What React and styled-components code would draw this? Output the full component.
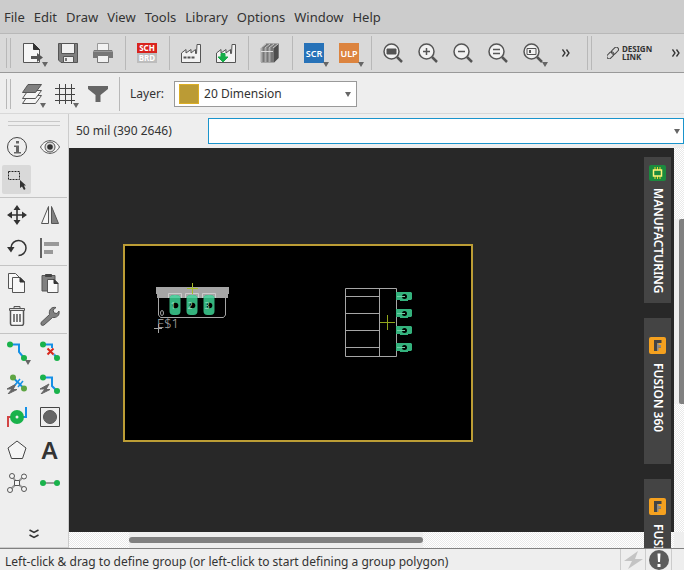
import React from "react";
import styled, { createGlobalStyle } from "styled-components";

const GlobalStyle = createGlobalStyle`
  *, *::before, *::after { box-sizing: border-box; }
  body { margin: 0; background: #eeeeee; }
  button, input, select { font: inherit; color: inherit; }
`;

const Page = styled.div`
  display: flex;
  flex-direction: column;
  height: 100vh;
  overflow: hidden;
  font-family: "Noto Sans", "Open Sans", sans-serif;
  font-size: 12px;
  line-height: 16px;
  color: #333333;
  background: #eeeeee;
`;

const MenuBar = styled.nav`
  display: flex;
  flex: none;
  gap: 9px;
  height: 33px;
  padding: 0 4px;
  align-items: center;
  font-size: 13px;
  background: #cccccc;
`;

const MenuItem = styled.button`
  padding: 0;
  border: 0;
  background: none;
  white-space: nowrap;
`;

const Toolbar = styled.div`
  display: flex;
  flex: none;
  align-items: center;
  height: ${(p) => (p.$main ? 40 : 41)}px;
  padding-top: ${(p) => (p.$main ? 0 : 2)}px;
  overflow: hidden;
  background: ${(p) => (p.$main ? "#d9d9d9" : "#eeeeee")};
  border-top: ${(p) => (p.$main ? "1px solid #b8b8b8" : "0")};
  border-bottom: 1px solid ${(p) => (p.$main ? "#999999" : "#d8d8d8")};
`;

const Grip = styled.span`
  flex: none;
  width: 5px;
  height: ${(p) => (p.$tall ? 34 : 30)}px;
  margin: 0 ${(p) => p.$after}px 0 ${(p) => p.$before}px;
  border: solid #b8b8b8;
  border-width: 0 1px;
`;

const Divider = styled.span`
  flex: none;
  width: 1px;
  height: 34px;
  margin: 0 3px 0 5px;
  background: #b8b8b8;
`;

const ToolButton = styled.button`
  display: flex;
  flex: none;
  position: relative;
  width: ${(p) => p.$width || 35}px;
  height: 32px;
  padding: 0;
  border: 0;
  background: none;
  align-items: center;
  justify-content: center;
`;

const DropMark = styled.span`
  position: absolute;
  right: 2px;
  bottom: 2px;
  border: solid transparent;
  border-width: 5px 3px 0;
  border-top-color: #666666;
`;

const DesignLink = styled.button`
  display: flex;
  flex: none;
  gap: 3px;
  align-items: center;
  padding: 0;
  border: 0;
  background: none;
  font-size: 8px;
  line-height: 8px;
  font-weight: 700;
  text-align: left;
`;

const LayerLabel = styled.label`
  margin: 0 10px 0 7px;
`;

const Combo = styled.div`
  display: flex;
  position: relative;
  align-items: center;
  flex: ${(p) => (p.$grow ? "1" : "none")};
  width: ${(p) => (p.$grow ? "auto" : "183px")};
  height: 26px;
  background: #ffffff;
  border: 1px solid ${(p) => (p.$grow ? "#1a94cc" : "#999999")};
`;

const Swatch = styled.span`
  flex: none;
  width: 20px;
  height: 20px;
  margin-left: 4px;
  background: #bb9b35;
  border: 1px solid #dcae24;
`;

const LayerSelect = styled.select`
  flex: 1;
  height: 24px;
  padding: 0 20px 0 5px;
  border: 0;
  outline: 0;
  appearance: none;
  background: transparent;
`;

const CommandInput = styled.input`
  flex: 1;
  min-width: 0;
  height: 24px;
  padding: 0 20px 0 6px;
  border: 0;
  outline: 0;
  background: transparent;
`;

const ComboArrow = styled.span`
  position: absolute;
  right: ${(p) => (p.$edge ? 3 : 5)}px;
  top: 10px;
  border: solid transparent;
  border-width: 5px 3px 0;
  border-top-color: #666666;
  pointer-events: none;
`;

const Body = styled.div`
  display: flex;
  flex: 1;
  min-height: 0;
`;

const Sidebar = styled.aside`
  display: flex;
  flex: none;
  flex-direction: column;
  width: 69px;
  border-right: 1px solid #cccccc;
  border-bottom: 1px solid #cccccc;
`;

const SideGrip = styled.div`
  height: 5px;
  flex: none;
  margin: 7px 8px 4px;
  border: solid #c8c8c8;
  border-width: 1px 0;
`;

const ToolGroup = styled.div`
  display: grid;
  flex: none;
  grid-template-columns: 33px 33px;
  grid-auto-rows: 33px;
  place-items: center;
  margin: 0 1px 0 0;
  padding-bottom: 1px;
  border-top: ${(p) => (p.$first ? "0" : "1px solid #c4c4c4")};
`;

const SideButton = styled.button`
  display: flex;
  position: relative;
  width: 29px;
  height: 29px;
  padding: 0;
  align-items: center;
  justify-content: center;
  border: 0;
  border-radius: 2px;
  background: ${(p) => (p.$active ? "#d9d9d9" : "none")};
`;

const SideMark = styled(DropMark)`
  right: 0;
  bottom: 0;
`;

const MoreButton = styled.button`
  display: flex;
  height: 16px;
  margin-top: auto;
  margin-bottom: 5px;
  padding: 0;
  border: 0;
  background: none;
  align-items: center;
  justify-content: center;
`;

const Editor = styled.main`
  display: flex;
  flex: 1;
  flex-direction: column;
  min-width: 0;
`;

const CommandRow = styled.div`
  display: flex;
  flex: none;
  height: 34px;
  align-items: center;
`;

const Coordinates = styled.span`
  flex: none;
  width: 139px;
  padding-left: 7px;
`;

const Workspace = styled.div`
  display: grid;
  flex: 1;
  position: relative;
  min-height: 0;
  grid-template: minmax(0, 1fr) 16px / minmax(0, 1fr) 10px;
  overflow: hidden;
`;

const Canvas = styled.div`
  padding: 96px 0 0 54px;
  overflow: hidden;
  background: #282828;
`;

const Track = styled.div`
  display: flex;
  flex-direction: ${(p) => (p.$vertical ? "column" : "row")};
  padding: ${(p) => (p.$vertical ? "71px 0 0" : "0 0 0 60px")};
  background: repeating-conic-gradient(#e9e9e9 0 25%, #ffffff 0 50%) 0 0 / 2px 2px;
`;

const ThumbArea = styled.div`
  display: flex;
  background: #eeeeee;
  padding: ${(p) => (p.$vertical ? "0 0 0 5px" : "5px 0")};
  ${(p) => (p.$vertical ? "height: 59%;" : "width: 54%;")}
`;

const Thumb = styled.div`
  flex: 1;
  border-radius: ${(p) => (p.$vertical ? "2px 0 0 2px" : "3px")};
  background: #808080;
`;

const TabStack = styled.div`
  display: flex;
  position: absolute;
  top: 9px;
  right: 13px;
  flex-direction: column;
  gap: 15px;
`;

const DockTab = styled.button`
  display: flex;
  flex: none;
  flex-direction: column;
  align-items: center;
  gap: ${(p) => (p.$inset ? 9 : 7)}px;
  width: 27px;
  height: 146px;
  padding: ${(p) => (p.$inset ? 19 : 8)}px 0 0;
  border: 0;
  background: #444444;
  color: #ffffff;
  font-weight: 600;
`;

const TabText = styled.span`
  writing-mode: vertical-rl;
  white-space: nowrap;
`;

const StatusBar = styled.footer`
  display: flex;
  flex: none;
  height: 22px;
  align-items: stretch;
  border-top: 1px solid #808080;
`;

const StatusText = styled.span`
  flex: 1;
  padding: 5px 0 0 5px;
  overflow: hidden;
  white-space: nowrap;
`;

const StatusCell = styled.span`
  display: flex;
  width: ${(p) => p.$width}px;
  align-items: center;
  justify-content: center;
  border-left: 1px solid #cccccc;
`;

const Svg = styled.svg`
  display: block;
  flex: none;
  font-family: "Noto Sans", sans-serif;
`;

const Icon = ({ children, w = 20, h = 20 }) => (
  <Svg width={w} height={h} viewBox={`0 0 ${w} ${h}`} fill="none" stroke="#555555" aria-hidden="true">
    {children}
  </Svg>
);

const NewIcon = () => (
  <Icon>
    <path d="M.5 .5H10.500L16.500 6.500V19.500H.5Z" fill="#f6f6f6" />
    <path d="M10.500 .5V6.500H16.500Z" fill="#333" stroke="#333" />
    <path d="M8 14.500H15" strokeWidth="3" />
    <path d="M14 10L20 14.500L14 19Z" fill="#555" stroke="none" />
  </Icon>
);

const SaveIcon = () => (
  <Icon>
    <path d="M.5 .5H19.500V19.500H3L.5 17Z" fill="#808080" />
    <path d="M3.500 .5H16.500V10.500H3.500Z" fill="#f0f0f0" />
    <path d="M5.500 13.500H15.500V19.500H5.500Z" fill="#eee" />
    <path d="M8 15V18" stroke="#777" strokeWidth="2" />
  </Icon>
);

const PrinterIcon = () => (
  <Icon>
    <path d="M4.500 .5H15.500V8H4.500Z" fill="#f2f2f2" stroke="#999" />
    <path d="M1 7H19L20 9V15H0V9Z" fill="#777" stroke="none" />
    <path d="M0 8.500H20" stroke="#999" />
    <path d="M4.500 12.500H15.500V19.500H4.500Z" fill="#f2f2f2" stroke="#777" />
  </Icon>
);

const SchBrdIcon = () => (
  <Icon>
    <path d="M0 0H20V10H0Z" fill="#d9231d" stroke="none" />
    <path d="M0 10H20V20H0Z" fill="#bdbdbd" stroke="none" />
    <g fill="#fff" stroke="none" fontSize="8" fontWeight="700" textAnchor="middle">
      <text x="10" y="8">SCH</text>
      <text x="10" y="18">BRD</text>
    </g>
  </Icon>
);

const FactoryIcon = ({ download }) => (
  <Icon>
    <path d="M.5 19.500V10L5 6.500V10L10 6.500V10L14.500 6.500V10.500H15.500L16 1.500H19.500V19.500Z" fill="#f2f2f2" />
    {download ? (
      <path d="M5 10.500H9V14H12L7 19L2 14H5Z" fill="#16ad49" stroke="#16ad49" />
    ) : (
      <path d="M2.500 14.500H14" strokeWidth="2" strokeDasharray="3 1" />
    )}
  </Icon>
);

const LibraryIcon = () => (
  <Icon>
    <path d="M1 5L6 .5H18.500V15L14 19.500H1Z" fill="#777" stroke="none" />
    <path d="M1.500 5V19M5.500 5V19M9.500 5V19" stroke="#aaa" strokeWidth="2" />
    <path d="M14 5L18.500 .5V15L14 19.500Z" fill="#4d4d4d" stroke="none" />
    <path d="M1 5L6 1M5 5L10 1M9 5L14 1M13 5L18 1" stroke="#c8c8c8" />
    <path d="M1 8.500H13" stroke="#ddd" />
  </Icon>
);

const BadgeIcon = ({ color, text }) => (
  <Icon>
    <path d="M0 0H20V20H0Z" fill={color} stroke="none" />
    <text x="10" y="14" fill="#fff" stroke="none" fontSize="9" fontWeight="600" textAnchor="middle">
      {text}
    </text>
  </Icon>
);

const ZoomIcon = ({ kind }) => (
  <Icon>
    <path d="M14 14L19 19" strokeWidth="2.500" />
    <circle cx="8.500" cy="8.500" r="7.500" fill="#f2f2f2" strokeWidth="1.500" />
    {kind === "fit" && <path d="M4 6H13V11H4Z" fill="#555" />}
    {kind === "in" && <path d="M5 8.500H12M8.500 5V12" strokeWidth="1.500" />}
    {kind === "out" && <path d="M5 8.500H12" strokeWidth="1.500" />}
    {kind === "redraw" && <path d="M5 6.500H12M5 10.500H12" strokeWidth="1.500" />}
    {kind === "select" && (
      <>
        <path d="M4 5.500H13V11.500H4Z" />
        <path d="M6 7H8V10H6Z" fill="#555" stroke="none" />
      </>
    )}
  </Icon>
);

const MoreIcon = () => (
  <Icon w={8} h={8}>
    <path d="M.5 .5L3 4L.5 7.500M4.500 .5L7 4L4.500 7.500" stroke="#333" strokeWidth="1.300" />
  </Icon>
);

const LinkIcon = () => (
  <Icon w={12} h={12}>
    <g transform="rotate(-45 6 6)" stroke="#444">
      <rect x="-1.500" y="3.500" width="8" height="4.500" rx="2.200" />
      <rect x="5" y="3.500" width="8" height="4.500" rx="2.200" />
    </g>
  </Icon>
);

const LayersIcon = () => (
  <Icon>
    <path d="M6 11.500H19.500L13.500 19.500H.5Z" fill="#f5f5f5" />
    <path d="M6 6.500H19.500L13.500 14.500H.5Z" fill="#f5f5f5" />
    <path d="M6 .5H19.500L13.500 8.500H.5Z" fill="#808080" />
  </Icon>
);

const GridIcon = () => (
  <Icon>
    <path d="M4.500 0V20M10.500 0V20M16.500 0V20M0 4.500H20M0 10.500H20M0 16.500H20" stroke="#444" />
  </Icon>
);

const FilterIcon = () => (
  <Icon>
    <path d="M0 2H20V5L12.500 11V18H7.500V11L0 5Z" fill="#666" stroke="none" />
  </Icon>
);

const InfoIcon = () => (
  <Icon>
    <circle cx="10" cy="10" r="9.500" stroke="#444" />
    <path d="M9 4H12V6.500H9ZM7 8.500H12V15H14V16.500H7V15H9V10H7Z" fill="#666" stroke="none" />
  </Icon>
);

const EyeIcon = () => (
  <Icon>
    <path d="M.5 10C5 1.500 15 1.500 19.500 10C15 18.500 5 18.500 .5 10Z" fill="#f5f5f5" />
    <circle cx="10" cy="10" r="5" fill="#ddd" />
    <circle cx="10" cy="10" r="2.800" fill="#333" stroke="none" />
  </Icon>
);

const SelectIcon = () => (
  <Icon>
    <path d="M1.500 1.500H12.500V9.500H1.500Z" stroke="#222" strokeDasharray="2 1" />
    <path d="M13 10V18L15 16.500L17 20L18.500 19L17 15.500H19Z" fill="#333" stroke="none" />
  </Icon>
);

const MoveIcon = () => (
  <Icon>
    <path d="M10 3V17M3 10H17" stroke="#333" strokeWidth="1.600" />
    <path d="M10 0L13.500 5H6.500ZM10 20L13.500 15H6.500ZM0 10L5 6.500V13.500ZM20 10L15 6.500V13.500Z" fill="#333" stroke="none" />
  </Icon>
);

const MirrorIcon = () => (
  <Icon>
    <path d="M8.500 1.500V18.500H1.500Z" fill="#f5f5f5" />
    <path d="M11.500 1.500V18.500H18.500Z" fill="#808080" />
  </Icon>
);

const RotateIcon = () => (
  <Icon>
    <path d="M4 9.500A7.500 7.500 0 1 1 11.500 17.500" stroke="#333" strokeWidth="1.500" />
    <path d="M0 9H7.500L4 14.500Z" fill="#333" stroke="none" />
  </Icon>
);

const AlignIcon = () => (
  <Icon>
    <path d="M1 0V20" stroke="#333" strokeWidth="1.500" />
    <path d="M4 4H19V8H4ZM4 12H13V16H4Z" fill="#999" stroke="none" />
  </Icon>
);

const CopyIcon = () => (
  <Icon>
    <path d="M1.500 .5H8.500L12 4V15.500H1.500Z" fill="#f8f8f8" />
    <path d="M5.500 4.500H13L17.500 9V19.500H5.500Z" fill="#f8f8f8" />
    <path d="M13 4.500V9H17.500Z" fill="#333" stroke="#333" />
  </Icon>
);

const PasteIcon = () => (
  <Icon>
    <path d="M2 2.500H15V18H2Z" fill="#808080" />
    <path d="M5.500 3.500V1.500H11.500V3.500Z" fill="#444" stroke="#444" />
    <path d="M7.500 6.500H14L18 10.500V19.500H7.500Z" fill="#f8f8f8" />
    <path d="M14 6.500V10.500H18Z" fill="#333" stroke="#333" />
  </Icon>
);

const TrashIcon = () => (
  <Icon>
    <path d="M3.500 5V17.500Q3.500 19.500 5.500 19.500H14.500Q16.500 19.500 16.500 17.500V5" fill="#f8f8f8" strokeWidth="1.500" />
    <path d="M7 8V16M10 8V16M13 8V16" strokeWidth="1.500" />
    <path d="M2.500 4.500H17.500V2.500H2.500ZM7 2V.5H13V2" fill="#ddd" />
  </Icon>
);

const WrenchIcon = () => (
  <Icon>
    <path d="M1 16.500L9.500 8.500C8.500 4 11.500 .5 16 1.500L13 4L14 7L17 7.500L19 5C20 9.500 16.500 12 12.500 11.500L4 19Q2 20 1 18.500Z" fill="#808080" />
  </Icon>
);

const BLUE = "#1590e6";
const GREEN = "#19b24b";

const RouteIcon = ({ cut }) => (
  <Icon>
    <path d="M3 3.500H12V11L17 17" stroke={BLUE} strokeWidth="2" />
    <circle cx="3" cy="3.500" r="3" fill={GREEN} stroke="none" />
    <circle cx="17" cy="17" r="3" fill={GREEN} stroke="none" />
    {cut && (
      <>
        <path d="M6.500 7.500H11V5H13V7.500H14.500V13.500H6.500Z" fill="#eee" stroke="none" />
        <path d="M11 4.500H13V7H11Z" fill={BLUE} stroke="none" />
        <path d="M7.500 7.500L13.500 13.500M13.500 7.500L7.500 13.500" stroke="#d8271c" strokeWidth="2" />
      </>
    )}
  </Icon>
);

const QuickRouteIcon = ({ broken }) => (
  <Icon>
    <path d="M9 10L0 15H5L1 20L10 15.500H6Z" fill="#666" stroke="#666" />
    {broken ? (
      <>
        <path d="M6 3.500L17 14.500" stroke={BLUE} strokeWidth="2" />
        <path d="M8 11L13 5M11 13L16 7" stroke={BLUE} strokeWidth="1.500" />
      </>
    ) : (
      <path d="M3 3.500H12V12L17 17" stroke={BLUE} strokeWidth="2" />
    )}
    <circle cx={broken ? 6 : 3} cy="3.500" r="3" fill={broken ? "#5ea543" : GREEN} stroke="none" />
    <circle cx="17" cy={broken ? 14.5 : 17} r="3" fill={broken ? "#5ea543" : GREEN} stroke="none" />
  </Icon>
);

const ViaIcon = () => (
  <Icon>
    <path d="M1 20V10H7" stroke="#d24545" strokeWidth="2" />
    <path d="M14 10H19V0" stroke={BLUE} strokeWidth="2" />
    <circle cx="10" cy="10" r="7" fill={GREEN} stroke="none" />
    <circle cx="10" cy="10" r="1.500" fill="#eee" stroke="none" />
  </Icon>
);

const HoleIcon = () => (
  <Icon>
    <path d="M.5 .5H19.500V19.500H.5Z" stroke="#444" />
    <circle cx="10" cy="10" r="6.500" fill="#666" />
  </Icon>
);

const PolygonIcon = () => (
  <Icon>
    <path d="M10 1L19 8L15.500 18.500H4.500L1 8Z" fill="#f5f5f5" stroke="#444" />
  </Icon>
);

const LetterIcon = styled.span`
  font-size: 24px;
  line-height: 29px;
  font-weight: 600;
`;

const RatsnestIcon = () => (
  <Icon>
    <path d="M3 17L10 10L17 3M5 3L10 10L17 16" stroke="#999" strokeWidth="2" />
    <g fill="#f5f5f5">
      <path d="M7.500 7.500H12.500V12.500H7.500Z" />
      <circle cx="5" cy="3" r="2.500" />
      <circle cx="17" cy="3.500" r="2.500" />
      <circle cx="3" cy="17" r="2.500" />
      <circle cx="17" cy="16" r="2.500" />
    </g>
  </Icon>
);

const AirwireIcon = () => (
  <Icon>
    <path d="M3 10H17" stroke="#999" strokeWidth="2" />
    <circle cx="3" cy="10" r="3" fill={GREEN} stroke="none" />
    <circle cx="17" cy="10" r="3" fill={GREEN} stroke="none" />
  </Icon>
);

const DownIcon = () => (
  <Icon w={10} h={10}>
    <path d="M.5 1L5 3.500L9.500 1M.5 6L5 8.500L9.500 6" stroke="#333" strokeWidth="1.500" />
  </Icon>
);

const ChipIcon = () => (
  <Icon w={17} h={16}>
    <rect width="17" height="16" rx="2" fill="#1b8a3e" stroke="none" />
    <path d="M6 2V14M8.500 2V14M11 2V14" stroke="#e9d72c" />
    <rect x="4.500" y="5" width="8" height="6" fill="#1b8a3e" stroke="#fff27a" strokeWidth="1.500" />
  </Icon>
);

const FusionIcon = () => (
  <Icon w={17} h={17}>
    <rect width="17" height="17" rx="2" fill="#f5a11f" stroke="none" />
    <path d="M5 3H12.500V6H8V8H12V10.500H8V14H5Z" fill="#444" stroke="none" />
    <path d="M8 6H9.500V14H8ZM9.500 8H12V10.500H9.500Z" fill="#8b8b8b" stroke="none" />
  </Icon>
);

const pinsA = [52, 69, 86];
const pinsB = [52, 69, 86, 103];

const Board = () => (
  <Svg width="350" height="198" viewBox="0 0 350 198" fill="none" role="img" aria-label="Board layout">
    <rect x="1" y="1" width="348" height="196" fill="#000" stroke="#bc9d35" strokeWidth="2" />
    <path d="M35.500 54V71L37.500 73.500H100.500L102.500 71V54" stroke="#a6a6a6" />
    <path d="M33 43H106V50H105V54H34V50H33Z" fill="#a6a6a6" />
    {pinsA.map((x, i) => (
      <g key={x}>
        <path d={`M${x - 6.5} 54V49.500H${x + 6.5}V54`} stroke="#cccccc" />
        <rect x={x - 5.5} y="51" width="11" height="20" rx="4" fill="#34b27d" />
        <path d={`M${x - 5.5} 54V53Q${x - 4} 51 ${x} 51T${x + 5.5} 53V54Z`} fill="#55cfa0" />
        <circle cx={x + 0.5} cy="61.500" r="2.800" fill="#000" />
        <text x={x - 2} y="65" textAnchor="middle" fontSize="9" fill="#8ed8b8">{i + 1}</text>
      </g>
    ))}
    <path d="M69.500 39V50M64 44.500H75" stroke="#a7bc25" />
    <ellipse cx="39" cy="69" rx="1.500" ry="2.500" stroke="#a6a6a6" />
    <text x="34" y="84" fontSize="13" fontWeight="300" fill="#b0b0b0">E$1</text>
    <path d="M35.500 80V89M31 84.500H39" stroke="#a6a6a6" />
    <path d="M222.500 44.500H273.500V112.500H222.500ZM256.500 44.500V112.500" stroke="#a6a6a6" />
    {pinsB.map((y) => (
      <g key={y}>
        <path d={`M222 ${y + 0.5}H256`} stroke="#a6a6a6" />
        <path d={`M273 ${y - 4}H288L289 ${y - 3}V${y + 3}L288 ${y + 4}H285V${y + 5}H277V${y + 4}H273Z`} fill="#34b27d" />
        <circle cx="281.500" cy={y + 0.5} r="2.500" fill="#000" />
        <path d={`M274 ${y + 0.5}H282`} stroke="#6fcfa5" />
      </g>
    ))}
    <path d="M264.500 71V86M257 78.500H272" stroke="#91a61c" />
  </Svg>
);

const BoltIcon = () => (
  <Icon>
    <path d="M15 1L1 11H9L5 19L20 9H12Z" fill="#c4c4c4" stroke="none" />
  </Icon>
);

const AlertIcon = () => (
  <Icon>
    <circle cx="10" cy="10" r="10" fill="#5c5c5c" stroke="none" />
    <path d="M8.500 3.500H11.500L11 12H9ZM8.500 14H11.500V17H8.500Z" fill="#fff" stroke="none" />
  </Icon>
);

const menus = ["File", "Edit", "Draw", "View", "Tools", "Library", "Options", "Window", "Help"];

const mainGroups = [
  [["New", <NewIcon />, true], ["Save", <SaveIcon />], ["Print", <PrinterIcon />]],
  [["Switch to schematic", <SchBrdIcon />]],
  [["Manufacturing", <FactoryIcon />], ["Generate CAM data", <FactoryIcon download />]],
  [["Library manager", <LibraryIcon />]],
  [["Run script", <BadgeIcon color="#2772b8" text="SCR" />, true], ["Run ULP", <BadgeIcon color="#dc843f" text="ULP" />, true]],
  [
    ["Zoom to fit", <ZoomIcon kind="fit" />],
    ["Zoom in", <ZoomIcon kind="in" />],
    ["Zoom out", <ZoomIcon kind="out" />],
    ["Redraw", <ZoomIcon kind="redraw" />],
    ["Zoom select", <ZoomIcon kind="select" />, true],
  ],
];

const sideGroups = [
  [["Info", <InfoIcon />], ["Show", <EyeIcon />], ["Group", <SelectIcon />]],
  [["Move", <MoveIcon />], ["Mirror", <MirrorIcon />], ["Rotate", <RotateIcon />], ["Align", <AlignIcon />]],
  [["Copy", <CopyIcon />], ["Paste", <PasteIcon />], ["Delete", <TrashIcon />], ["Change", <WrenchIcon />]],
  [
    ["Route", <RouteIcon />],
    ["Ripup", <RouteIcon cut />],
    ["Quickroute airwire", <QuickRouteIcon broken />],
    ["Quickroute", <QuickRouteIcon />],
    ["Via", <ViaIcon />],
    ["Hole", <HoleIcon />],
    ["Polygon", <PolygonIcon />],
    ["Text", <LetterIcon>A</LetterIcon>],
    ["Ratsnest", <RatsnestIcon />],
    ["Signal", <AirwireIcon />],
  ],
];

export default function App() {
  return (
    <>
      <GlobalStyle />
      <Page>
        <MenuBar>
          {menus.map((m) => (
            <MenuItem key={m}>{m}</MenuItem>
          ))}
        </MenuBar>

        <Toolbar $main>
          <Grip $before={6} $after={4} />
          {mainGroups.map((group, i) => (
            <React.Fragment key={i}>
              {i > 0 && <Divider />}
              {group.map(([label, icon, drop]) => (
                <ToolButton key={label} aria-label={label}>
                  {icon}
                  {drop && <DropMark />}
                </ToolButton>
              ))}
            </React.Fragment>
          ))}
          <ToolButton $width={32} aria-label="More tools"><MoreIcon /></ToolButton>
          <Grip $tall $before={5} $after={15} />
          <DesignLink>
            <LinkIcon />
            <span>DESIGN<br />LINK</span>
          </DesignLink>
          <ToolButton $width={47} aria-label="More links"><MoreIcon /></ToolButton>
        </Toolbar>

        <Toolbar>
          <Grip $before={6} $after={4} />
          <ToolButton $width={33} aria-label="Layer settings"><LayersIcon /><DropMark /></ToolButton>
          <ToolButton $width={33} aria-label="Grid"><GridIcon /><DropMark /></ToolButton>
          <ToolButton $width={33} aria-label="Selection filter"><FilterIcon /></ToolButton>
          <Divider />
          <LayerLabel htmlFor="layer">Layer:</LayerLabel>
          <Combo>
            <Swatch />
            <LayerSelect id="layer" defaultValue="20">
              <option value="20">20 Dimension</option>
            </LayerSelect>
            <ComboArrow />
          </Combo>
        </Toolbar>

        <Body>
          <Sidebar>
            <SideGrip />
            {sideGroups.map((group, i) => (
              <ToolGroup key={i} $first={i === 0}>
                {group.map(([label, icon]) => (
                  <SideButton key={label} aria-label={label} $active={label === "Group"}>
                    {icon}
                    {label === "Route" && <SideMark />}
                  </SideButton>
                ))}
              </ToolGroup>
            ))}
            <MoreButton aria-label="More commands"><DownIcon /></MoreButton>
          </Sidebar>

          <Editor>
            <CommandRow>
              <Coordinates>50 mil (390 2646)</Coordinates>
              <Combo $grow>
                <CommandInput aria-label="Command" />
                <ComboArrow $edge />
              </Combo>
            </CommandRow>
            <Workspace>
              <Canvas><Board /></Canvas>
              <Track $vertical><ThumbArea $vertical><Thumb $vertical /></ThumbArea></Track>
              <Track><ThumbArea><Thumb /></ThumbArea></Track>
              <TabStack>
                <DockTab><ChipIcon /><TabText>MANUFACTURING</TabText></DockTab>
                <DockTab $inset><FusionIcon /><TabText>FUSION 360</TabText></DockTab>
                <DockTab $inset><FusionIcon /><TabText>FUSION 360</TabText></DockTab>
              </TabStack>
            </Workspace>
          </Editor>
        </Body>

        <StatusBar>
          <StatusText>Left-click &amp; drag to define group (or left-click to start defining a group polygon)</StatusText>
          <StatusCell $width={25}><BoltIcon /></StatusCell>
          <StatusCell $width={26}><AlertIcon /></StatusCell>
          <StatusCell $width={13} />
        </StatusBar>
      </Page>
    </>
  );
}
